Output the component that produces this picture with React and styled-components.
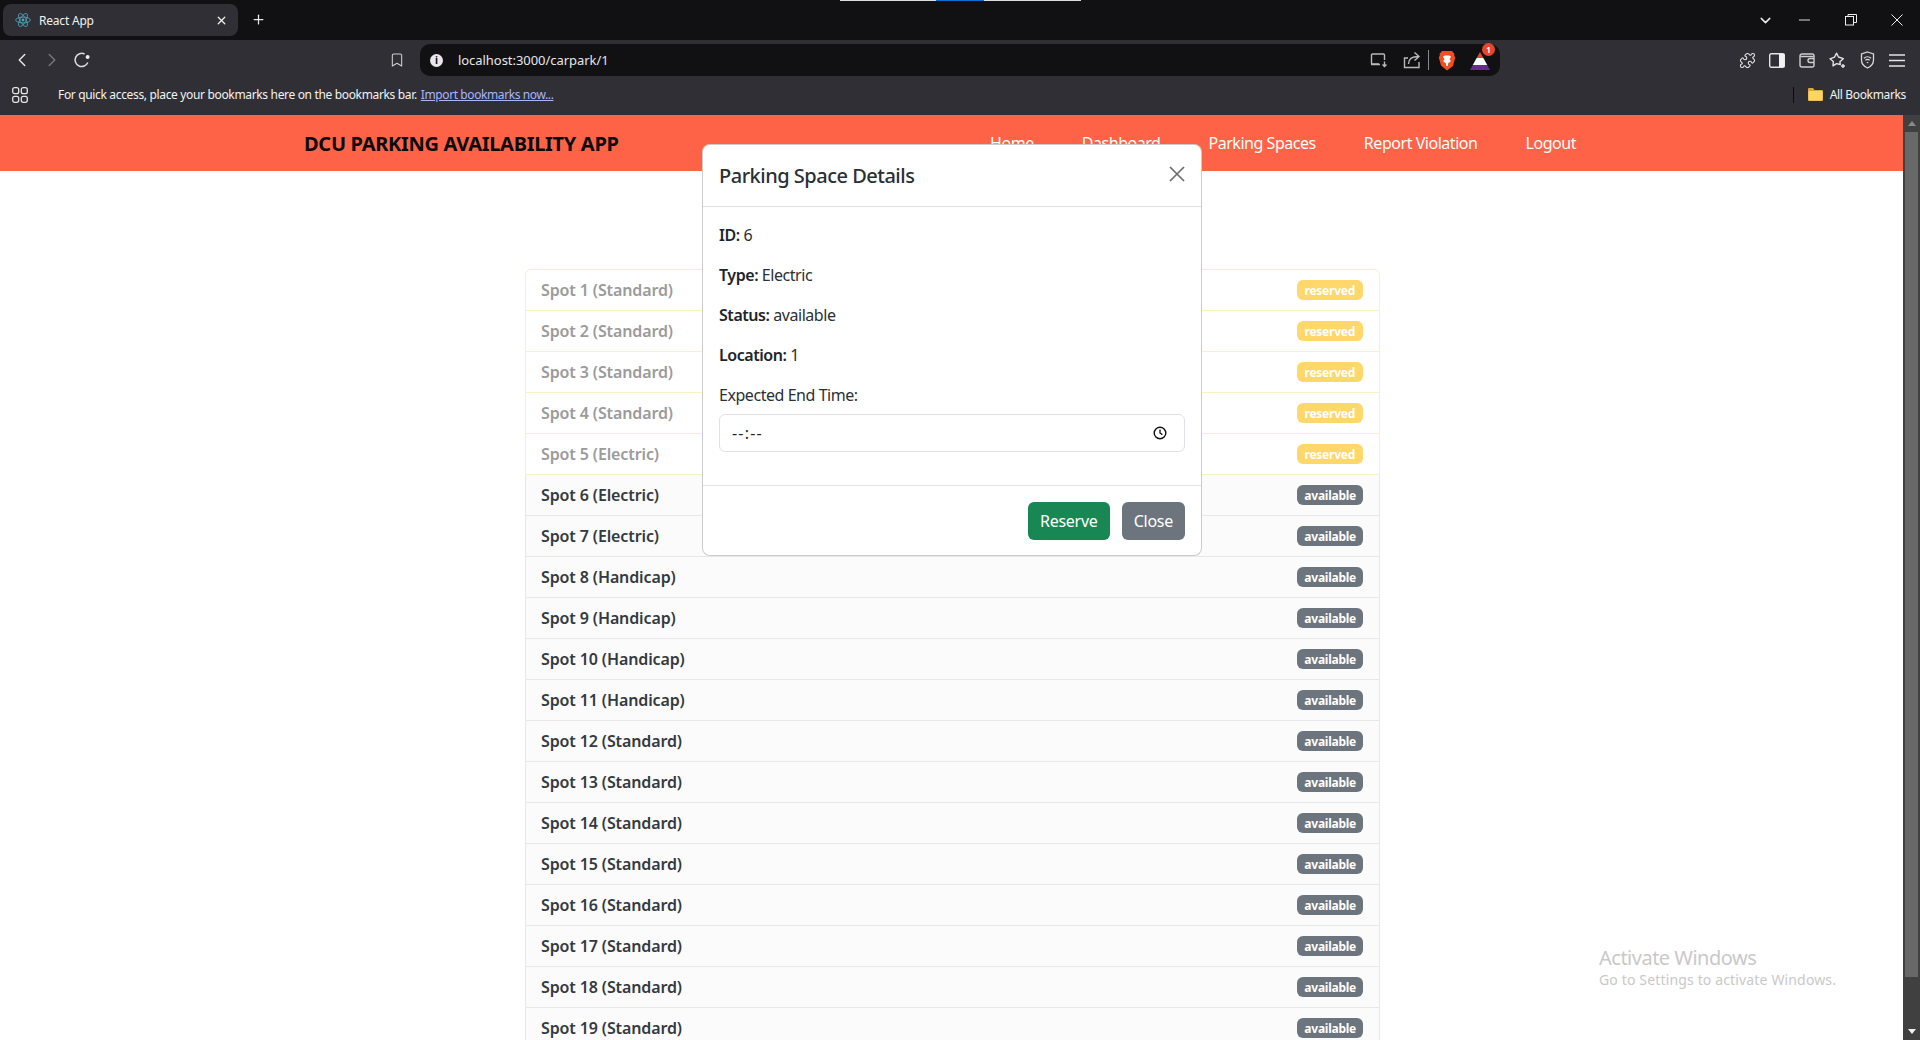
import styled, { createGlobalStyle } from "styled-components";
import { ChevronLeft, ChevronRight, ChevronDown, Puzzle, X, Plus, Bookmark } from "lucide-react";

const spots = Array.from({ length: 19 }, (_, i) => {
    const id = i + 1;
    let type = "Standard";
    if (id >= 5 && id <= 7) type = "Electric";
    if (id >= 8 && id <= 11) type = "Handicap";
    return { id, type, status: id <= 5 ? "reserved" : "available" };
});

const navLinks = ["Home", "Dashboard", "Parking Spaces", "Report Violation", "Logout"];
const details = [
    ["ID:", "6"],
    ["Type:", "Electric"],
    ["Status:", "available"],
    ["Location:", "1"],
];

export default function App() {
    return (
        <Screen>
            <GlobalStyle />
            <SnapBar />
            <TabStrip>
                <Tab>
                    <ReactLogo />
                    <TabTitle>React App</TabTitle>
                    <TabClose><X size={13} strokeWidth={2.4} /></TabClose>
                </Tab>
                <NewTab><Plus size={15} strokeWidth={2} /></NewTab>
                <WindowButtons>
                    <WinButton $w={34}><ChevronDown size={17} strokeWidth={2} /></WinButton>
                    <WinButton $w={46}><MinIcon /></WinButton>
                    <WinButton $w={46}><RestoreIcon /></WinButton>
                    <WinButton $w={46}><CloseIcon /></WinButton>
                </WindowButtons>
            </TabStrip>
            <Toolbar>
                <ToolIcon><ChevronLeft size={22} strokeWidth={1.6} /></ToolIcon>
                <ToolIcon $dim><ChevronRight size={22} strokeWidth={1.6} /></ToolIcon>
                <ToolIcon><ReloadIcon /></ToolIcon>
                <BookmarkSlot><Bookmark size={16} strokeWidth={1.6} /></BookmarkSlot>
                <AddressBar>
                    <InfoDot>i</InfoDot>
                    <Url>localhost:3000/carpark/1</Url>
                    <AddressRight>
                        <ScreencastIcon />
                        <ShareIcon />
                        <AddressDivider />
                        <BraveLion />
                        <RewardsIcon>
                            <RewardsTriangle />
                            <RewardsBadge>1</RewardsBadge>
                        </RewardsIcon>
                    </AddressRight>
                </AddressBar>
                <ExtIcons>
                    <ToolIcon><Puzzle size={17} strokeWidth={1.5} /></ToolIcon>
                    <ToolIcon><SidebarIcon /></ToolIcon>
                    <ToolIcon><WalletIcon /></ToolIcon>
                    <ToolIcon><LeoIcon /></ToolIcon>
                    <ToolIcon><ShieldIcon /></ToolIcon>
                    <ToolIcon><MenuIcon /></ToolIcon>
                </ExtIcons>
            </Toolbar>
            <BookmarksBar>
                <AppsIcon />
                <BookmarkHint>For quick access, place your bookmarks here on the bookmarks bar.</BookmarkHint>
                <ImportLink>Import bookmarks now...</ImportLink>
                <AllBookmarks>
                    <BarDivider />
                    <FolderIcon />
                    <span>All Bookmarks</span>
                </AllBookmarks>
            </BookmarksBar>
            <Viewport>
                <Page>
                    <Header>
                        <Brand>DCU PARKING AVAILABILITY APP</Brand>
                        <Nav>
                            {navLinks.map((link) => (
                                <NavLink key={link}>{link}</NavLink>
                            ))}
                        </Nav>
                    </Header>
                    <SpotList>
                        {spots.map((spot) => (
                            <SpotRow key={spot.id} $reserved={spot.status === "reserved"}>
                                <SpotName $reserved={spot.status === "reserved"}>
                                    Spot {spot.id} ({spot.type})
                                </SpotName>
                                <Badge $reserved={spot.status === "reserved"}>{spot.status}</Badge>
                            </SpotRow>
                        ))}
                    </SpotList>
                    <Modal>
                        <ModalHeader>
                            <ModalTitle>Parking Space Details</ModalTitle>
                            <ModalClose>
                                <svg width="16" height="16" viewBox="0 0 16 16">
                                    <path d="M1 1l14 14M15 1L1 15" stroke="#6d6d6d" strokeWidth="1.7" fill="none" />
                                </svg>
                            </ModalClose>
                        </ModalHeader>
                        <ModalBody>
                            {details.map(([label, value]) => (
                                <DetailLine key={label}>
                                    <strong>{label}</strong> {value}
                                </DetailLine>
                            ))}
                            <FieldLabel>Expected End Time:</FieldLabel>
                            <TimeField>
                                <TimeValue>--:--</TimeValue>
                                <svg width="14" height="14" viewBox="0 0 14 14">
                                    <circle cx="7" cy="7" r="5.8" stroke="#111" strokeWidth="1.4" fill="none" />
                                    <path d="M7 3.5V7l2.4 1.6" stroke="#111" strokeWidth="1.3" fill="none" />
                                </svg>
                            </TimeField>
                        </ModalBody>
                        <ModalFooter>
                            <ActionButton $color="#198754">Reserve</ActionButton>
                            <ActionButton $color="#6c757d">Close</ActionButton>
                        </ModalFooter>
                    </Modal>
                    <Watermark>
                        <WatermarkTitle>Activate Windows</WatermarkTitle>
                        <WatermarkText>Go to Settings to activate Windows.</WatermarkText>
                    </Watermark>
                </Page>
                <Scrollbar>
                    <ScrollArrow $up />
                    <ScrollThumb />
                    <ScrollArrow />
                </Scrollbar>
            </Viewport>
        </Screen>
    );
}

const ReactLogo = () => (
    <LogoBox>
        <svg width="16" height="16" viewBox="-12 -12 24 24" fill="none" stroke="#4fa3b8" strokeWidth="1.3">
            <circle r="2.2" fill="#4fa3b8" stroke="none" />
            <ellipse rx="11" ry="4.4" />
            <ellipse rx="11" ry="4.4" transform="rotate(60)" />
            <ellipse rx="11" ry="4.4" transform="rotate(120)" />
        </svg>
    </LogoBox>
);

const MinIcon = () => (
    <svg width="12" height="2" viewBox="0 0 12 2"><path d="M0 1h11" stroke="#ddd" strokeWidth="1" /></svg>
);

const RestoreIcon = () => (
    <svg width="12" height="12" viewBox="0 0 12 12" fill="none" stroke="#eee" strokeWidth="1">
        <rect x="0.5" y="2.5" width="8" height="8.5" />
        <path d="M3 2.5V.5h8.5v8H8.5" />
    </svg>
);

const CloseIcon = () => (
    <svg width="12" height="12" viewBox="0 0 12 12"><path d="M.5.5l11 11M11.5.5l-11 11" stroke="#eee" strokeWidth="1" /></svg>
);

const ReloadIcon = () => (
    <svg width="18" height="18" viewBox="0 0 18 18" fill="none">
        <path d="M14.8 11.5A6.6 6.6 0 1 1 11.6 3" stroke="#dcdcdc" strokeWidth="1.5" />
        <circle cx="14.6" cy="6" r="2" fill="#f0f0f0" />
    </svg>
);

const ScreencastIcon = () => (
    <IconAt $left={0}>
        <svg width="18" height="16" viewBox="0 0 18 16" fill="none" stroke="#b8b8b8" strokeWidth="1.4">
            <path d="M9 12H2.5a1 1 0 0 1-1-1V3a1 1 0 0 1 1-1h11a1 1 0 0 1 1 1v5" />
            <path d="M1 12.5h9M14.5 9.5v4.5M12.5 12.5l2 2 2-2" />
        </svg>
    </IconAt>
);

const ShareIcon = () => (
    <IconAt $left={15}>
        <svg width="18" height="18" viewBox="0 0 18 18" fill="none" stroke="#b8b8b8" strokeWidth="1.4">
            <path d="M16 11v5.5H1.5V7H5" />
            <path d="M5.5 13c0-5 3-7.5 10-7.5M11.5 1.5l4.5 4-4.5 4" />
        </svg>
    </IconAt>
);

const BraveLion = () => (
    <IconAt $left={9}>
        <svg width="18" height="21" viewBox="0 0 18 21">
            <path d="M4 1h10l2.5 3-0.3 1.5 1 2-2.2 8.5L9 20.5 3 15.5.8 7.5l1-2L1.5 4z" fill="#f1501e" />
            <path d="M5 6.5l2-1h4l2 1-1.5 3 1.5 1.5-3 2.5v2l-1 .8-1-.8v-2L5 11l1.5-1.5z" fill="#fff" />
        </svg>
    </IconAt>
);

const SidebarIcon = () => (
    <svg width="16" height="15" viewBox="0 0 16 15">
        <rect x="0.7" y="0.7" width="14.6" height="13.6" rx="1.5" fill="none" stroke="#e4e4e4" strokeWidth="1.4" />
        <rect x="10" y="1" width="5.5" height="13" fill="#f2f2f2" />
    </svg>
);

const WalletIcon = () => (
    <svg width="16" height="15" viewBox="0 0 16 15" fill="none" stroke="#cfcfcf" strokeWidth="1.4">
        <path d="M15 4V2.5A1.5 1.5 0 0 0 13.5 1H3a2 2 0 0 0-2 2v9a2 2 0 0 0 2 2h10.5a1.5 1.5 0 0 0 1.5-1.5V4z" />
        <path d="M15 5.5h-4a2 2 0 0 0 0 4h4" />
        <path d="M1.5 3.5h13" />
    </svg>
);

const LeoIcon = () => (
    <svg width="17" height="17" viewBox="0 0 17 17" fill="none" stroke="#e4e4e4" strokeWidth="1.4">
        <path d="M7.5 1.2l2 3.8 4.8 1.7-3.4 3 .4 2.8-3.8-.9-3.5 2.2.3-4.3L1 6.8l4.5-1.7z" strokeLinejoin="round" />
        <path d="M14 12v4M12 14h4" />
    </svg>
);

const ShieldIcon = () => (
    <svg width="15" height="18" viewBox="0 0 15 18" fill="none" stroke="#d8d8d8" strokeWidth="1.3">
        <path d="M7.5 1l6 2v6c0 3.5-2.5 6.5-6 8-3.5-1.5-6-4.5-6-8V3z" />
        <path d="M4 7.2c2-1.8 5-1.8 7 0M5.3 9.2c1.3-1 3.1-1 4.4 0" />
        <circle cx="7.5" cy="11.5" r="0.8" fill="#d8d8d8" stroke="none" />
    </svg>
);

const MenuIcon = () => (
    <svg width="16" height="13" viewBox="0 0 16 13"><path d="M0 1h16M0 6.5h16M0 12h16" stroke="#e4e4e4" strokeWidth="1.3" /></svg>
);

const AppsIcon = () => (
    <AppsSlot>
        <svg width="16" height="16" viewBox="0 0 16 16" fill="none" stroke="#e4e4e4" strokeWidth="1.3">
            <rect x="0.7" y="0.7" width="6" height="6" rx="2" />
            <rect x="9.3" y="0.7" width="6" height="6" rx="2" />
            <rect x="0.7" y="9.3" width="6" height="6" rx="2" />
            <rect x="9.3" y="9.3" width="6" height="6" rx="2" />
        </svg>
    </AppsSlot>
);

const FolderIcon = () => (
    <svg width="15" height="13" viewBox="0 0 15 13">
        <path d="M0 1a1 1 0 0 1 1-1h4l1.5 2H14a1 1 0 0 1 1 1v9a1 1 0 0 1-1 1H1a1 1 0 0 1-1-1z" fill="#d9a93a" />
        <rect x="0.5" y="3" width="14" height="9.5" rx="1" fill="#fbd661" />
    </svg>
);

const GlobalStyle = createGlobalStyle`
    html, body {
        margin: 0;
        padding: 0;
        height: 100%;
        overflow: hidden;
        background: #fff;
    }
    * {
        box-sizing: border-box;
    }
`;

const uiFont = `"Noto Sans", "Open Sans", "Liberation Sans", sans-serif`;

const Screen = styled.div`
    position: relative;
    width: 1920px;
    height: 1040px;
    display: flex;
    flex-direction: column;
    overflow: hidden;
    font-family: ${uiFont};
`;

const SnapBar = styled.div`
    position: absolute;
    top: 0;
    left: 840px;
    width: 241px;
    height: 1px;
    background: linear-gradient(90deg, #ddd 0 96px, #0a6fd0 96px 144px, #ddd 144px);
`;

const TabStrip = styled.div`
    height: 40px;
    flex: none;
    display: flex;
    align-items: flex-start;
    padding: 4px 0 0 3px;
    background: #111113;
`;

const Tab = styled.div`
    width: 235px;
    height: 32px;
    display: flex;
    align-items: center;
    padding: 0 8px 0 12px;
    border-radius: 8px;
    background: #2f2f35;
    color: #f1f1f1;
`;

const LogoBox = styled.div`
    width: 16px;
    height: 16px;
    display: flex;
`;

const TabTitle = styled.span`
    margin-left: 8px;
    flex: 1;
    font-size: 12px;
    letter-spacing: -0.2px;
`;

const TabClose = styled.span`
    display: flex;
    margin-right: 2px;
`;

const NewTab = styled.span`
    display: flex;
    margin: 8px 0 0 13px;
    color: #e8e8e8;
`;

const WindowButtons = styled.div`
    margin-left: auto;
    margin-top: -4px;
    height: 40px;
    display: flex;
    align-items: center;
`;

const WinButton = styled.span`
    width: ${(props) => props.$w}px;
    display: flex;
    justify-content: center;
    color: #eee;
`;

const Toolbar = styled.div`
    height: 36px;
    flex: none;
    display: flex;
    align-items: flex-end;
    padding-left: 7px;
    background: #2f2f35;
`;

const ToolIcon = styled.span`
    width: 30px;
    height: 32px;
    flex: none;
    display: flex;
    align-items: center;
    justify-content: center;
    color: ${(props) => (props.$dim ? "#777" : "#e6e6e6")};
`;

const BookmarkSlot = styled(ToolIcon)`
    margin-left: 285px;
    color: #d0d0d0;
`;

const AddressBar = styled.div`
    width: 1080px;
    height: 32px;
    margin-left: 8px;
    flex: none;
    display: flex;
    align-items: center;
    padding: 0 8px;
    border-radius: 10px;
    background: #111113;
`;

const InfoDot = styled.span`
    width: 13px;
    height: 13px;
    margin-left: 2px;
    flex: none;
    border-radius: 50%;
    background: #e8e8e8;
    color: #111;
    font-size: 10px;
    font-weight: 700;
    line-height: 13px;
    text-align: center;
`;

const Url = styled.span`
    margin-left: 15px;
    color: #e6e6e6;
    font-size: 13px;
    letter-spacing: -0.05px;
`;

const AddressRight = styled.div`
    margin-left: auto;
    display: flex;
    align-items: center;
    padding-right: 2px;
`;

const IconAt = styled.span`
    display: flex;
    margin-left: ${(props) => props.$left}px;
`;

const AddressDivider = styled.span`
    width: 1px;
    height: 20px;
    margin-left: 7px;
    background: #8a8a8a;
`;

const RewardsIcon = styled.span`
    position: relative;
    width: 20px;
    height: 20px;
    margin-left: 14px;
    display: flex;
`;

const RewardsTriangle = styled.span`
    width: 20px;
    height: 18px;
    margin-top: 2px;
    clip-path: polygon(50% 0, 100% 100%, 0 100%);
    background: linear-gradient(180deg, #e8452c 0 35%, #fff 35% 70%, #6a2a90 70%);
`;

const RewardsBadge = styled.span`
    position: absolute;
    top: -7px;
    right: -5px;
    width: 13px;
    height: 13px;
    border-radius: 50%;
    background: #e8452c;
    color: #fff;
    font-size: 8px;
    font-weight: 700;
    line-height: 13px;
    text-align: center;
`;

const ExtIcons = styled.div`
    margin-left: 232px;
    display: flex;
`;

const BookmarksBar = styled.div`
    height: 39px;
    flex: none;
    display: flex;
    align-items: center;
    padding: 0 0 2px 12px;
    background: #2f2f35;
    color: #f2f2f2;
    font-size: 12px;
    letter-spacing: -0.34px;
`;

const AppsSlot = styled.span`
    display: flex;
    width: 46px;
`;

const BookmarkHint = styled.span``;

const ImportLink = styled.a`
    margin-left: 4px;
    color: #a9b4ff;
    text-decoration: underline;
    letter-spacing: -0.4px;
`;

const AllBookmarks = styled.span`
    margin-left: auto;
    display: flex;
    align-items: center;
    gap: 7px;
    padding-right: 14px;
`;

const BarDivider = styled.span`
    width: 1px;
    height: 16px;
    margin-right: 7px;
    background: #0c0c0c;
`;

const Viewport = styled.div`
    flex: 1;
    min-height: 0;
    display: flex;
`;

const Page = styled.div`
    position: relative;
    flex: 1;
    min-width: 0;
    overflow: hidden;
    background: #fff;
`;

const Header = styled.header`
    height: 56px;
    display: flex;
    align-items: center;
    padding: 0 327px 0 304px;
    background: #ff6347;
`;

const Brand = styled.div`
    color: #0a0a0a;
    font-size: 20px;
    font-weight: 700;
    letter-spacing: -0.3px;
`;

const Nav = styled.nav`
    margin-left: auto;
    display: flex;
    gap: 48px;
`;

const NavLink = styled.a`
    color: #fff;
    font-size: 16px;
    letter-spacing: -0.46px;
`;

const SpotList = styled.div`
    width: 855px;
    margin: 98px 0 0 525px;
`;

const SpotRow = styled.div`
    height: 41px;
    display: flex;
    align-items: center;
    justify-content: space-between;
    padding: 0 16px 0 15px;
    border: 1px solid ${(props) => (props.$reserved ? "#fdf0bf" : "#e7e8ea")};
    border-top: none;
    background: ${(props) => (props.$reserved ? "#fff" : "#fbfbfb")};

    &:first-child {
        height: 42px;
        border-top: 1px solid #fdf0bf;
        border-radius: 6px 6px 0 0;
    }
`;

const SpotName = styled.span`
    color: ${(props) => (props.$reserved ? "#9b9b9b" : "#343a40")};
    font-size: 16px;
    font-weight: 600;
    letter-spacing: -0.12px;
`;

const Badge = styled.span`
    height: 20px;
    display: flex;
    align-items: center;
    padding: 0 ${(props) => (props.$reserved ? 8 : 7)}px;
    border-radius: 6px;
    background: ${(props) => (props.$reserved ? "#ffd76a" : "#6c757d")};
    color: #fff;
    font-size: 12px;
    font-weight: 700;
    letter-spacing: -0.25px;
`;

const Modal = styled.div`
    position: absolute;
    top: 29px;
    left: 702px;
    width: 500px;
    height: 412px;
    display: flex;
    flex-direction: column;
    border: 1px solid rgba(0, 0, 0, 0.2);
    border-radius: 8px;
    background: #fff;
    color: #2b3035;
`;

const ModalHeader = styled.div`
    height: 62px;
    flex: none;
    display: flex;
    align-items: center;
    justify-content: space-between;
    padding: 0 16px;
    border-bottom: 1px solid #dee2e6;
`;

const ModalTitle = styled.div`
    font-size: 20px;
    font-weight: 500;
    letter-spacing: -0.5px;
`;

const ModalClose = styled.span`
    display: flex;
    margin-top: -4px;
`;

const ModalBody = styled.div`
    flex: 1;
    padding: 16px;
    font-size: 16px;
    letter-spacing: -0.45px;
`;

const DetailLine = styled.p`
    margin: 0 0 16px;
    line-height: 24px;

    strong {
        font-weight: 600;
        color: #212529;
    }
`;

const FieldLabel = styled.div`
    margin-bottom: 7px;
    line-height: 24px;
`;

const TimeField = styled.div`
    height: 38px;
    display: flex;
    align-items: center;
    justify-content: space-between;
    padding: 0 17px 0 12px;
    border: 1px solid #dee2e6;
    border-radius: 6px;
    background: #fff;
`;

const TimeValue = styled.span`
    color: #212529;
    font-size: 16px;
    letter-spacing: 1.2px;
`;

const ModalFooter = styled.div`
    height: 70px;
    flex: none;
    display: flex;
    align-items: center;
    justify-content: flex-end;
    gap: 12px;
    padding: 0 16px;
    border-top: 1px solid #dee2e6;
`;

const ActionButton = styled.button`
    height: 38px;
    padding: 0 12px;
    border: none;
    border-radius: 6px;
    background: ${(props) => props.$color};
    color: #fff;
    font-family: inherit;
    font-size: 16px;
    letter-spacing: -0.25px;
`;

const Watermark = styled.div`
    position: absolute;
    left: 1599px;
    top: 831px;
    color: #c9c9c9;
`;

const WatermarkTitle = styled.div`
    font-size: 20px;
    line-height: 24px;
    letter-spacing: -0.5px;
`;

const WatermarkText = styled.div`
    font-size: 14px;
    line-height: 20px;
    letter-spacing: 0.15px;
`;

const Scrollbar = styled.div`
    width: 17px;
    flex: none;
    display: flex;
    flex-direction: column;
    align-items: center;
    background: #404040;
`;

const ScrollArrow = styled.span`
    height: 17px;
    flex: none;
    display: flex;
    align-items: center;

    &::before {
        content: "";
        border-left: 4px solid transparent;
        border-right: 4px solid transparent;
        ${(props) =>
            props.$up ? "border-bottom: 5px solid #8a8a8a;" : "border-top: 5px solid #f0f0f0;"}
    }
`;

const ScrollThumb = styled.div`
    width: 13px;
    height: 845px;
    margin-bottom: auto;
    background: #686868;
`;
